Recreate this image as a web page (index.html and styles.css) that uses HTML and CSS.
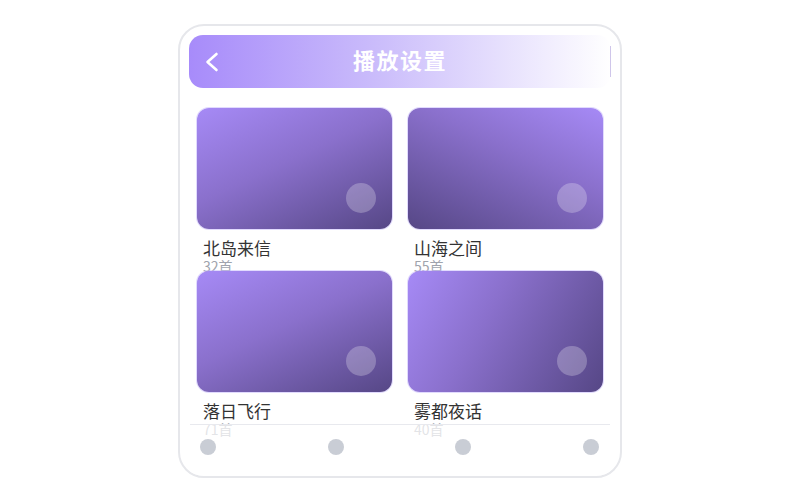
FILE: index.html
```html
<!DOCTYPE html>
<html lang="zh-CN">
<head>
    <meta charset="UTF-8">
    <meta name="viewport" content="width=device-width, initial-scale=1.0">
    <title>播放设置</title>
    <link rel="stylesheet" href="styles.css">
</head>
<body>
    <div class="phone">
        <!-- Header -->
        <div class="header">
            <button class="back" type="button">
                <svg width="16" height="22" viewBox="0 0 16 22">
                    <polyline points="12.5,3 3.5,11 12.5,19" fill="none" stroke="#fff" stroke-width="2.6" stroke-linecap="round" stroke-linejoin="round"/>
                </svg>
            </button>
            <h1>播放设置</h1>
            <span class="header-side"></span>
        </div>

        <!-- Playlists -->
        <div class="grid">
            <div class="item">
                <div class="cover cover-a"><span class="dot"></span></div>
                <div class="name">北岛来信</div>
                <div class="count">32首</div>
            </div>
            <div class="item">
                <div class="cover cover-b"><span class="dot"></span></div>
                <div class="name">山海之间</div>
                <div class="count">55首</div>
            </div>
            <div class="item">
                <div class="cover cover-a"><span class="dot"></span></div>
                <div class="name">落日飞行</div>
                <div class="count">71首</div>
            </div>
            <div class="item">
                <div class="cover cover-c"><span class="dot"></span></div>
                <div class="name">雾都夜话</div>
                <div class="count">40首</div>
            </div>
        </div>

        <!-- Bottom nav -->
        <div class="tabbar">
            <span class="tab"></span>
            <span class="tab"></span>
            <span class="tab"></span>
            <span class="tab"></span>
        </div>
    </div>
</body>
</html>
```

FILE: styles.css
```css
/* General Styles */
body {
    margin: 0;
    padding: 0;
    background-color: #fff;
    font-family: 'Noto Sans CJK SC', 'Noto Sans', sans-serif;
}

.phone {
    position: relative;
    box-sizing: border-box;
    width: 444px;
    height: 454px;
    margin: 24px auto 0;
    padding: 9px;
    border: 2px solid #e6e7eb;
    border-radius: 26px;
    overflow: hidden;
    background-color: #fff;
}

/* Header */
.header {
    display: flex;
    align-items: center;
    justify-content: space-between;
    height: 53px;
    padding: 0 0 0 15px;
    border-radius: 14px;
    background: linear-gradient(90deg, #a78bfa 0%, #cbbdfb 45%, #fff 100%);
}

.back {
    display: flex;
    align-items: center;
    width: 30px;
    height: 30px;
    padding: 0;
    border: none;
    background: none;
    cursor: pointer;
}

.header h1 {
    margin: -5px 0 0;
    color: #fff;
    font-size: 22px;
    font-weight: bold;
    line-height: 30px;
    letter-spacing: 1.5px;
}

.header-side {
    width: 44px;
    height: 31px;
    border-right: 1px solid #cfc6ea;
}

/* Playlist grid */
.grid {
    display: grid;
    grid-template-columns: 1fr 1fr;
    column-gap: 16px;
    margin-top: 20px;
    padding: 0 8px;
}

.item {
    height: 163px;
}

.cover {
    position: relative;
    height: 121px;
    border-radius: 12px;
    box-shadow: 0 0 0 1px rgba(196, 181, 253, 0.5);
}

.cover-a {
    background: linear-gradient(155deg, #a68af6 0%, #8a70cc 45%, #564786 100%);
}

.cover-b {
    background: linear-gradient(205deg, #a68af6 0%, #8a70cc 40%, #564786 100%);
}

.cover-c {
    background: linear-gradient(120deg, #a68af6 0%, #8a70cc 40%, #564786 100%);
}

.dot {
    position: absolute;
    right: 16px;
    bottom: 16px;
    width: 30px;
    height: 30px;
    border-radius: 50%;
    background-color: rgba(255, 255, 255, 0.25);
}

.name {
    margin-top: 8px;
    padding-left: 6px;
    color: #333;
    font-size: 17px;
    line-height: 22px;
}

.count {
    padding-left: 6px;
    color: #a0a4ad;
    font-size: 14px;
    line-height: 14px;
}

/* Bottom nav */
.tabbar {
    position: absolute;
    left: 10px;
    right: 10px;
    bottom: 0;
    display: flex;
    justify-content: space-between;
    height: 52px;
    box-sizing: border-box;
    padding: 14px 11px 0 10px;
    border-top: 1px solid #e8e9ee;
    background-color: rgba(255, 255, 255, 0.7);
}

.tab {
    width: 16px;
    height: 16px;
    border-radius: 50%;
    background-color: #c9cdd5;
}
```
